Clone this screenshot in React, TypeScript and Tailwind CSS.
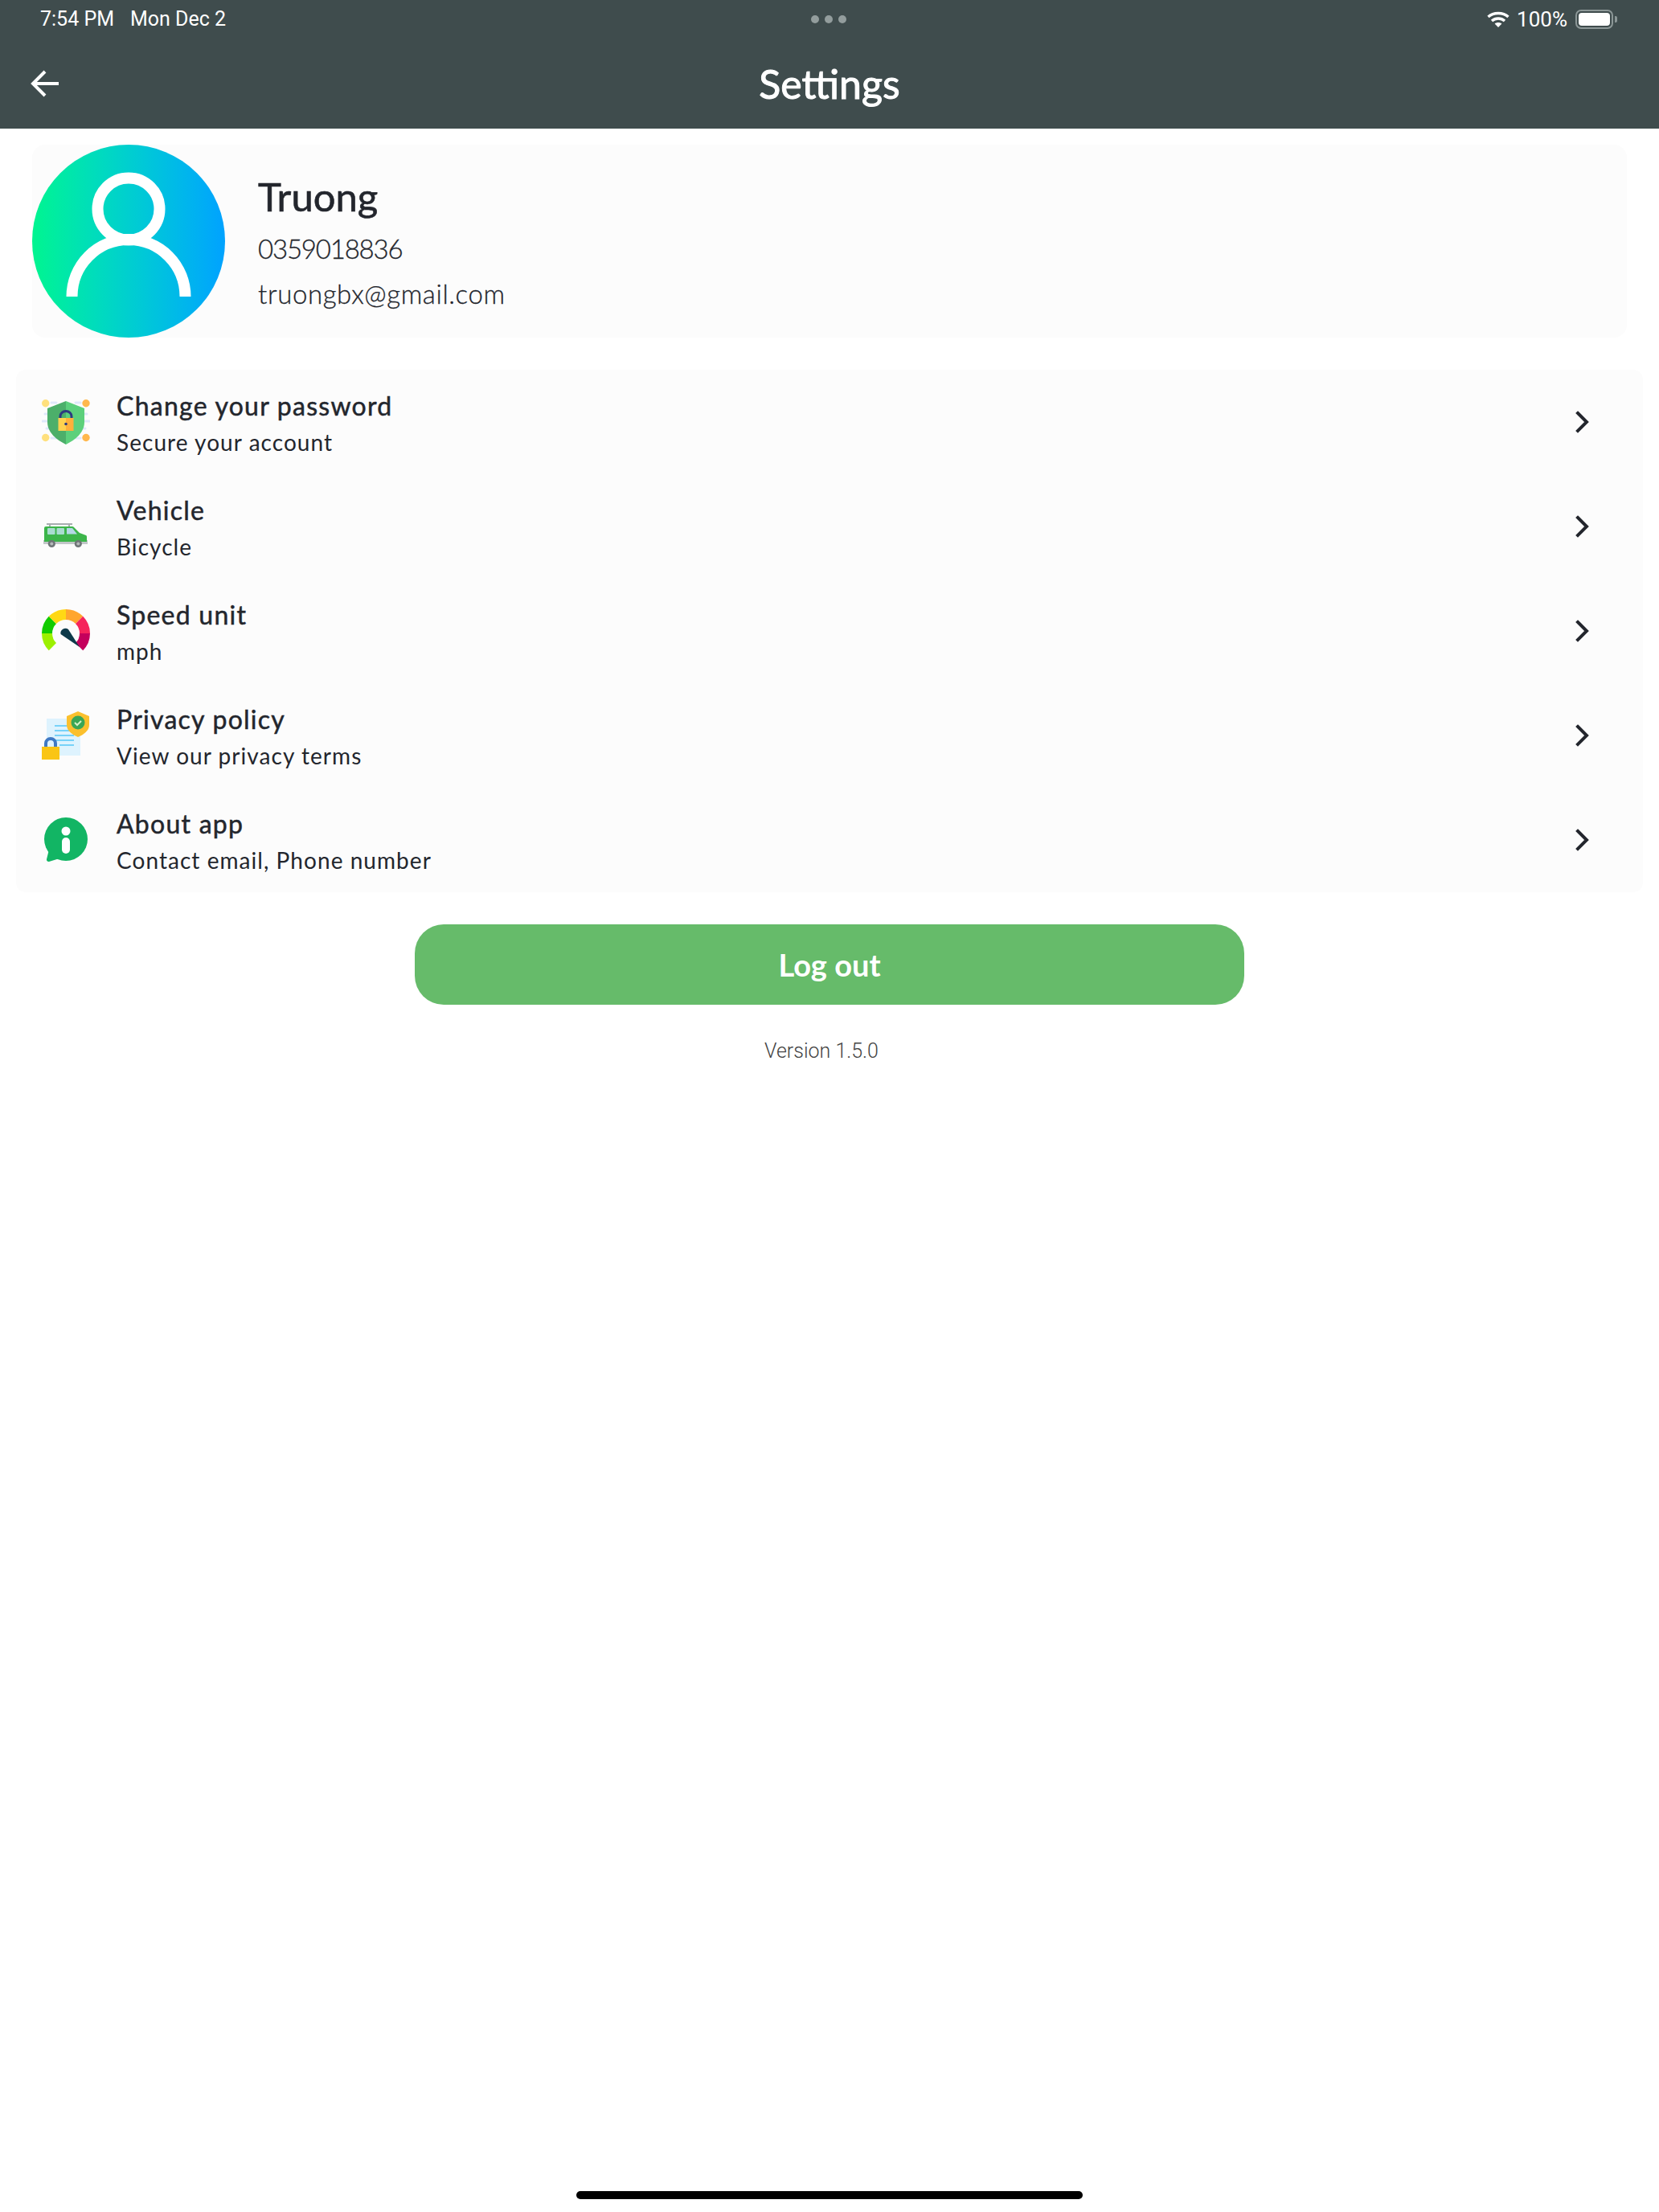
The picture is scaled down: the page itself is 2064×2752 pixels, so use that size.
import React from 'react';

const ShieldIcon = () => (
  <svg viewBox="0 0 60 60" className="w-[60px] h-[60px]">
    <g stroke="#dfe8fb" strokeWidth="3" strokeLinecap="round">
      <path d="M12 6h6M42 6h6M1 29h58M12 50h6M42 50h6M46 20h10M4 20h10M46 38h8M6 38h8" />
    </g>
    <circle cx="4.7" cy="6.7" r="4.7" fill="#ffe07d" />
    <circle cx="55" cy="6.7" r="4.7" fill="#ffb84d" />
    <circle cx="4.7" cy="49.5" r="4.7" fill="#ffe07d" />
    <circle cx="55" cy="49.5" r="4.7" fill="#ffb84d" />
    <path d="M30 4 L7 13 V30 C7 43 18 52 30 58 Z" fill="#4caf6a" />
    <path d="M30 4 L53 13 V30 C53 43 42 52 30 58 Z" fill="#5cd07c" />
    <path d="M23 26 V23 a7 6.5 0 0 1 14 0 V26" fill="none" stroke="#2c3a80" strokeWidth="3" />
    <rect x="20.5" y="25" width="9.5" height="16" fill="#ffd24f" />
    <rect x="30" y="25" width="9.5" height="16" fill="#ffb03b" />
    <circle cx="30" cy="32.5" r="1.8" fill="#2c3a80" />
  </svg>
);

const VanIcon = () => (
  <svg viewBox="0 0 60 60" className="w-[60px] h-[60px]">
    <path d="M6 27h32M10 27v3M34 27v3" stroke="#a8adb0" strokeWidth="2" fill="none" />
    <rect x="2" y="47" width="55" height="5" fill="#c2c6c8" />
    <path d="M3 32 a2 2 0 0 1 2-2 H38 a3 3 0 0 1 2 1 L47 38 L55 41 a2 2 0 0 1 1 2 V49 H3 Z" fill="#3cb54a" />
    <rect x="7" y="32" width="9.5" height="8" rx="1" fill="#a9dcd0" />
    <rect x="18.5" y="32" width="9.5" height="8" rx="1" fill="#a9dcd0" />
    <path d="M31 32 H38 L44 39.5 H31 Z" fill="#b5d8e6" />
    <circle cx="12.3" cy="51.5" r="4.6" fill="#6f7577" />
    <circle cx="12.3" cy="51.5" r="2" fill="#b4b8ba" />
    <circle cx="45.3" cy="51.5" r="4.6" fill="#6f7577" />
    <circle cx="45.3" cy="51.5" r="2" fill="#b4b8ba" />
  </svg>
);

const GaugeIcon = () => (
  <svg viewBox="0 0 60 60" className="w-[60px] h-[60px]" fill="none" strokeWidth="13">
    <path d="M13.38 49.62 A23.5 23.5 0 0 1 6.5 33" stroke="#9cf000" />
    <path d="M6.5 33 A23.5 23.5 0 0 1 13.38 16.38" stroke="#12cc00" />
    <path d="M13.38 16.38 A23.5 23.5 0 0 1 30 9.5" stroke="#ffd814" />
    <path d="M30 9.5 A23.5 23.5 0 0 1 46.62 16.38" stroke="#ffa62e" />
    <path d="M46.62 16.38 A23.5 23.5 0 0 1 53.5 33" stroke="#f5245c" />
    <path d="M53.5 33 A23.5 23.5 0 0 1 46.62 49.62" stroke="#c4005c" />
    <path d="M23.5 34 a6 6 0 0 1 9.5-6 L47 50 Z" fill="#0d3a4a" stroke="none" />
  </svg>
);

const PrivacyIcon = () => (
  <svg viewBox="0 0 60 60" className="w-[60px] h-[60px]">
    <rect x="6" y="9" width="42" height="46" fill="#def3fe" />
    <path d="M16 18h20M16 24h24M16 30h24M16 36h24M22 42h18" stroke="#56c8f8" strokeWidth="1.6" />
    <path d="M5 46 V40 a6 6 0 0 1 12 0 V46" fill="none" stroke="#3f79c4" strokeWidth="4" />
    <rect x="0" y="44" width="22" height="16" fill="#fac515" />
    <path d="M45 0 L59 6 V17 C59 24 52 29 45 32 C38 29 31 24 31 17 V6 Z" fill="#fbc02d" />
    <circle cx="45" cy="14" r="8.5" fill="#3aa655" />
    <path d="M41 14l3 3 5-5" fill="none" stroke="#d5f1c7" strokeWidth="2" />
  </svg>
);

const InfoIcon = () => (
  <svg viewBox="0 0 60 60" className="w-[60px] h-[60px]">
    <circle cx="30" cy="29" r="27" fill="#12b564" />
    <path d="M10 38 L6 54 a2.5 2.5 0 0 0 3 3 L22 53 Z" fill="#12b564" />
    <circle cx="30" cy="19" r="5.5" fill="#fff" />
    <rect x="25" y="27" width="10" height="20" rx="5" fill="#fff" />
  </svg>
);

const Chevron = () => (
  <svg viewBox="0 0 20 28" className="w-[20px] h-[28px]" fill="none" stroke="#23262d" strokeWidth="4" strokeLinecap="square">
    <path d="M3 3 L14 14 L3 25" />
  </svg>
);

const rows = [
  { title: 'Change your password', sub: 'Secure your account', Icon: ShieldIcon },
  { title: 'Vehicle', sub: 'Bicycle', Icon: VanIcon },
  { title: 'Speed unit', sub: 'mph', Icon: GaugeIcon },
  { title: 'Privacy policy', sub: 'View our privacy terms', Icon: PrivacyIcon },
  { title: 'About app', sub: 'Contact email, Phone number', Icon: InfoIcon },
];

const SettingRow = ({ title, sub, Icon }: (typeof rows)[number]) => (
  <div className="h-[130px] flex items-center pl-[32px] pr-[64px]">
    <Icon />
    <div className="ml-[33px] pt-[5px] flex-1 flex flex-col">
      <span className="text-[32px] leading-[46px] tracking-[1.25px] text-[#23262d] [-webkit-text-stroke:0.5px_#23262d]">{title}</span>
      <span className="text-[28px] leading-[45px] tracking-[1.05px] text-[#23262d]">{sub}</span>
    </div>
    <Chevron />
  </div>
);

export default function App() {
  return (
    <div className="w-[2064px] h-[2752px] bg-white flex flex-col font-['Lato','Noto_Sans',sans-serif]">
      <header className="h-[160px] bg-[#3f4c4d] text-white flex flex-col shrink-0">
        <div className="h-[48px] pl-[50px] pr-[52px] grid grid-cols-[1fr_auto_1fr] items-center font-['Roboto',sans-serif] text-[25px]">
          <div className="flex gap-[20px]">
            <span>7:54 PM</span>
            <span>Mon Dec 2</span>
          </div>
          <div className="flex gap-[7px]">
            <span className="w-[10px] h-[10px] rounded-full bg-[#939d9d]" />
            <span className="w-[10px] h-[10px] rounded-full bg-[#939d9d]" />
            <span className="w-[10px] h-[10px] rounded-full bg-[#939d9d]" />
          </div>
          <div className="flex items-center justify-end">
            <svg viewBox="0 0 28 20" className="w-[28px] h-[20px]" fill="none" stroke="#fff" strokeWidth="3.4">
              <path d="M1.5 7 C8 1 20 1 26.5 7" />
              <path d="M6 12 C10.5 8 17.5 8 22 12" />
              <path d="M14 20 L9.6 15.6 C12 13.6 16 13.6 18.4 15.6 Z" fill="#fff" stroke="none" />
            </svg>
            <span className="ml-[9px] text-[26px]">100%</span>
            <div className="ml-[10px] w-[47px] h-[24px] rounded-[7px] border-2 border-[#8c9797] p-[2px]">
              <div className="w-full h-full rounded-[4px] bg-white" />
            </div>
            <span className="ml-[2px] w-[3px] h-[8px] rounded-r-[2px] bg-[#8c9797]" />
          </div>
        </div>
        <div className="flex-1 relative flex items-center justify-center">
          <svg viewBox="0 0 36 34" className="absolute left-[38px] top-[39px] w-[36px] h-[34px]" fill="none" stroke="#fff" strokeWidth="4">
            <path d="M35 17 H3 M18 2 L3 17 L18 32" />
          </svg>
          <h1 className="text-[50px] leading-none [-webkit-text-stroke:1px_#fff]">Settings</h1>
        </div>
      </header>

      <section className="mt-[20px] mx-[40px] h-[240px] bg-[#fcfcfc] rounded-[16px] flex items-center">
        <div className="w-[240px] h-[240px] rounded-full bg-gradient-to-r from-[#00f58f] to-[#00a2ff] shrink-0">
          <svg viewBox="0 0 240 240" className="w-[240px] h-[240px]" fill="none" stroke="#fff" strokeWidth="14">
            <circle cx="120" cy="80" r="38.5" />
            <path d="M49.5 189 A70.5 71 0 0 1 190.5 189" />
          </svg>
        </div>
        <div className="ml-[41px] pt-[3px] flex flex-col text-[#23262d]">
          <span className="text-[49px] leading-[60px] [-webkit-text-stroke:0.6px_#23262d]">Truong</span>
          <span className="mt-[10px] text-[33px] leading-[50px] tracking-[-1.2px] font-light [-webkit-text-stroke:0.3px_#23262d]">0359018836</span>
          <span className="mt-[6px] text-[33px] leading-[50px] tracking-[0.6px] font-light [-webkit-text-stroke:0.3px_#23262d]">truongbx@gmail.com</span>
        </div>
      </section>

      <section className="mt-[40px] mx-[20px] bg-[#fcfcfc] rounded-[12px]">
        {rows.map((row) => (
          <SettingRow key={row.title} {...row} />
        ))}
      </section>

      <button className="mt-[40px] mx-auto w-[1032px] h-[100px] rounded-[36px] bg-[#66bb6a] text-white text-[38px] font-bold">
        Log out
      </button>

      <div className="mt-[41px] pr-[20px] text-center font-['Roboto',sans-serif] font-light text-[25px] leading-[34px] text-[#444]">
        Version 1.5.0
      </div>

      <div className="mt-auto mb-[16px] mx-auto w-[630px] h-[10px] rounded-full bg-black" />
    </div>
  );
}
